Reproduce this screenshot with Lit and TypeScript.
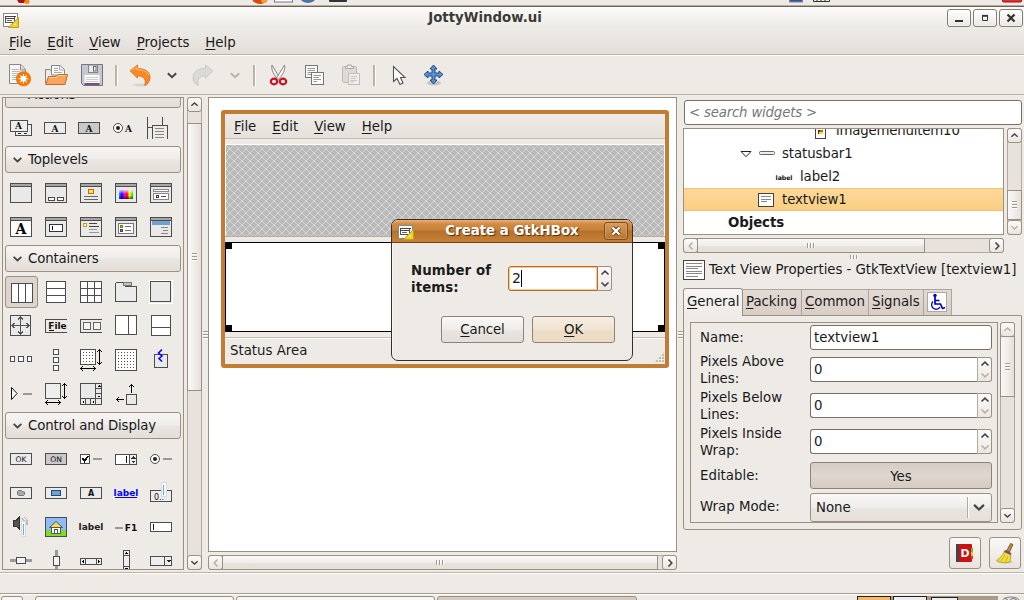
import { LitElement, html, css, svg, TemplateResult } from "lit";
import { customElement } from "lit/decorators.js";

const K = "#4d4d4d";
const L = "#e9e9e9";

const rect = (x: number, y: number, w: number, h: number, fill = L, stroke = K, r = 0) =>
  svg`<rect x=${x + 0.5} y=${y + 0.5} width=${w - 1} height=${h - 1} rx=${r} fill=${fill} stroke=${stroke}/>`;
const box = (x: number, y: number, w: number, h: number, fill: string) =>
  svg`<rect x=${x} y=${y} width=${w} height=${h} fill=${fill}/>`;
const label = (x: number, y: number, s: string, size = 8, fill = "#111", weight = "bold", fam = "DejaVu Sans") =>
  svg`<text x=${x} y=${y} font-size=${size} font-weight=${weight} font-family="${fam}, sans-serif" text-anchor="middle" fill=${fill}>${s}</text>`;
const line = (d: string, c = K, w = 1) => svg`<path d=${d} fill="none" stroke=${c} stroke-width=${w}/>`;

const win = (inner: unknown, fill = L) =>
  svg`${rect(0, 1, 22, 20, fill, K, 1)}${box(1, 2, 20, 2, "#a6a6a6")}${box(1, 4, 20, 1, K)}${inner}`;
const btn = (inner: unknown, fill = "#ececec") => svg`${rect(0, 5, 22, 12, fill, K, 1)}${inner}`;
const dots = (n: number) => {
  const out = [];
  for (let y = 3; y < n - 2; y += 3) for (let x = 3; x < n - 2; x += 3) out.push(box(x, y, 1, 1, "#555"));
  return out;
};
const arrowH = (y: number) => line(`M0.5 ${y}H15.5M3 ${y - 2.5}L0.7 ${y}L3 ${y + 2.5}M13 ${y - 2.5}L15.3 ${y}L13 ${y + 2.5}`, "#000");
const arrowV = (x: number) => line(`M${x} 0.5V15.5M${x - 2.5} 3L${x} 0.7L${x + 2.5} 3M${x - 2.5} 13L${x} 15.3L${x + 2.5} 13`, "#000");

const actions: TemplateResult[] = [
  svg`${rect(5, 7, 17, 12, "#eee", K, 1)}${rect(0, 3, 18, 12, "#eee", K, 1)}${label(8.5, 12, "A", 9, "#111", "bold", "DejaVu Serif")}${box(8, 16, 3, 1, "#333")}${box(14, 16, 3, 1, "#333")}`,
  btn(label(11, 14.5, "A", 9, "#111", "bold", "DejaVu Serif")),
  btn(label(11, 14.5, "A", 9, "#111", "bold", "DejaVu Serif"), "#c9c9c9"),
  svg`<g shape-rendering="auto"><circle cx="5" cy="11" r="4.5" fill="#fff" stroke=${K}/><circle cx="5" cy="11" r="2" fill="#222"/></g>${label(15.5, 14.5, "A", 9, "#111", "bold", "DejaVu Serif")}`,
  svg`${line("M0.5 0V22M15.5 0V8M0 10.5H6")}${line("M5.5 22V8.5H20.5V22")}${line("M8 11.5H17M8 14.5H17M8 17.5H17M8 20.5H17", "#888")}${box(5, 9, 1, 13, K)}`,
];

const toplevels: TemplateResult[] = [
  win(""),
  win(svg`${rect(3, 15, 7, 4, "#fff", K, 1)}${rect(12, 15, 7, 4, "#fff", K, 1)}`),
  win(svg`${rect(8, 7, 6, 5, "#ffec3d", "#c9661a", 1)}${line("M4 14.5H18M4 17.5H18", "#666")}`),
  win(svg`<defs><linearGradient id="hue"><stop offset="0" stop-color="#00a8ff"/><stop offset=".2" stop-color="#1a00ff"/><stop offset=".4" stop-color="#f0f"/><stop offset=".58" stop-color="#f00"/><stop offset=".75" stop-color="#ff0"/><stop offset="1" stop-color="#00d840"/></linearGradient><linearGradient id="fade" x2="0" y2="1"><stop offset="0" stop-color="#fff" stop-opacity=".75"/><stop offset=".45" stop-color="#fff" stop-opacity="0"/><stop offset=".6" stop-opacity="0"/><stop offset="1" stop-opacity=".6"/></linearGradient></defs><rect x="4" y="8" width="14" height="9" fill="url(#hue)"/><rect x="4" y="8" width="14" height="9" fill="url(#fade)"/>`),
  win(svg`${rect(3, 7, 16, 3, "#fff", "#888", 1)}${rect(3, 11, 16, 7, "#fff", "#888", 1)}${rect(6, 13, 3, 3, "#fff", "#333")}${line("M11 14.5H16", "#555")}`),
  win(label(11, 18, "A", 14, "#000", "bold", "DejaVu Serif"), "#fff"),
  win(svg`${rect(4, 8, 14, 8, "#fff", "#333", 1)}${box(7, 10, 1, 4, "#000")}`),
  win(svg`${rect(3, 7, 4, 4, "#fff", "#c9a000")}${line("M9 7.5H17M9 10.5H19", "#444")}${line("M9 13.5H17M9 16.5H19", "#999")}`),
  win(svg`${rect(3, 7, 16, 11, "#fff", "#777", 1)}${rect(5, 9, 3, 3, "#7fd83c", "#4e9a06")}${rect(5, 13, 3, 3, "#ad7fa8", "#5c3566")}${line("M10 10.5H16M10 14.5H16", "#777")}`),
  win(svg`${box(2, 5, 18, 4, "#729fcf")}${line("M11 11.5H18M13 14.5H18M11 17.5H18", "#888")}`),
];

const containers: TemplateResult[] = [
  svg`${rect(1, 2, 22, 20, "#fff", K, 1)}${line("M8.5 3V21M15.5 3V21")}`,
  svg`${rect(1, 0, 20, 22, "#fff", K, 1)}${line("M2 7.5H20M2 14.5H20")}`,
  svg`${rect(0, 0, 22, 22, "#fff", K, 1)}${line("M1 7.5H21M1 14.5H21M7.5 1V21M14.5 1V21")}`,
  svg`<path d="M0.5 20.5V2.5L1.5 1.5H8.5L11 5.5H21.5V20.5Z" fill="#ebebeb" stroke=${K}/>${rect(8, 1, 9, 4, "#c4c4c4", "#777", 1)}`,
  svg`${rect(-1, -1, 24, 24, "none", "#fff")}${rect(0, 0, 21, 21, L, K, 1)}`,
  svg`${rect(0, 0, 21, 21, L, K, 1)}${line("M10.5 2V19M2 10.5H19M8 4.5L10.5 2L13 4.5M8 16.5L10.5 19L13 16.5M4.5 8L2 10.5L4.5 13M16.5 8L19 10.5L16.5 13", "#555")}`,
  svg`${line("M22 4.5H1L0.5 5V16.5L1 17.5H22")}${label(12.5, 14, "File", 9)}${box(4, 15, 5, 1, "#111")}`,
  svg`${line("M22 4.5H1L0.5 5V16.5L1 17.5H22")}${rect(3, 7, 8, 8, "#f4f4f4", "#666", 1)}${rect(13, 7, 8, 8, "#f4f4f4", "#666", 1)}`,
  svg`${rect(0, 0, 22, 20, "#fff", K, 1)}${line("M13.5 1V19")}`,
  svg`${rect(1, 0, 20, 21, "#fff", K, 1)}${line("M2 12.5H20")}`,
  svg`${rect(0, 7, 5, 6, "#fff", K, 1)}${rect(8, 7, 6, 6, "#fff", K, 1)}${rect(17, 7, 5, 6, "#fff", K, 1)}`,
  svg`${rect(8, 0, 6, 6, "#fff", K, 1)}${rect(8, 8, 6, 6, "#fff", K, 1)}${rect(8, 16, 6, 6, "#fff", K, 1)}`,
  svg`${rect(0, 0, 16, 16, "#fff", K, 1)}${dots(16)}${arrowH(19.5)}${arrowV(19.5)}`,
  svg`${rect(0, 0, 22, 22, "#fff", K, 1)}${dots(22)}`,
  svg`${rect(4, 5, 14, 14, L, K, 1)}<path shape-rendering="auto" d="M12 0.500L8.500 4L12 7L9 9.500L12 12.500" fill="none" stroke="#00f" stroke-width="1.500"/>`,
  svg`<path d="M1.5 4.5L7 10.5L1.5 16.5Z" fill="#fff" stroke="#111" shape-rendering="auto"/>${box(13, 10, 9, 2, "#999")}`,
  svg`${rect(0, 0, 16, 16, "#eee", K, 1)}${arrowH(19.5)}${arrowV(19.5)}`,
  svg`${rect(0, 0, 22, 22, L, K, 1)}${line("M0 15.5H22M15.5 0V22M16 5.5H22M16 10.5H22M5.5 16V22M10.5 16V22")}<path d="M17 4H21L19 2ZM17 12.5H21L19 14.5ZM4 17V21L2 19ZM12.5 17V21L14.5 19Z"/>`,
  svg`${rect(11, 11, 11, 11, L, K, 1)}${line("M16.5 1.5V9.5M14 4L16.5 1.5L19 4M1.5 16.5H8.5M4 14L1.5 16.5L4 19", "#000")}`,
];

const controls: TemplateResult[] = [
  btn(label(11, 14, "OK", 7.6, "#111", "normal")),
  btn(label(11, 14, "ON", 7.6, "#111", "normal"), "#c9c9c9"),
  svg`${rect(0, 6, 10, 10, "#fff", K, 1)}${line("M2.5 10L4.5 13L8 8", "#111", 1.8)}${box(13, 10, 9, 2, "#999")}`,
  svg`${rect(0, 6, 22, 11, "#fff", K, 1)}${box(15, 7, 6, 9, "#eee")}${line("M14.5 6V17")}${box(11, 8, 1, 7, "#111")}<path d="M16 10.5H21L18.5 8ZM16 12.5H21L18.5 15Z" fill="#333"/>`,
  svg`<g shape-rendering="auto"><circle cx="5" cy="11" r="4.5" fill="#fff" stroke=${K}/><circle cx="5" cy="11" r="2" fill="#222"/></g>${box(13, 10, 9, 2, "#999")}`,
  btn(svg`<path shape-rendering="auto" d="M7.500 9.500L8.500 8.500H11.500L12.500 9.500L14.500 10V12.500L13.500 13.500H8.500L7.500 12.500Z" fill="#aaa" stroke="#777"/>`),
  btn(rect(6, 8, 10, 6, "#729fcf", "#204a87")),
  btn(label(11, 14, "A", 8, "#111")),
  svg`${label(11, 14, "label", 9, "#00f")}${box(0, 15, 22, 1, "#00f")}`,
  svg`${rect(0, 8, 22, 12, "#eee", K, 1)}${label(9, 18, "0..", 8, "#111", "normal")}${rect(11, 0, 6, 15, "#f5f8fc", "#d5dce5", 1)}${box(13, 3, 1, 10, "#7aa7e0")}`,
  svg`<path d="M3 4.500H6L9 1.500V12.500L6 10H3Z" fill="#555" stroke="#333"/>${line("M11 2L14 4V9M14 1L17 4V9", "#bbb", 1.2)}${rect(11, 5, 5, 16, "#f5f8fc", "#d5dce5", 1)}${box(13, 8, 1, 11, "#7aa7e0")}`,
  svg`${rect(0, 1, 22, 20, "#8cbcfb", K, 1)}${box(1, 14, 20, 6, "#7fdc2f")}<g shape-rendering="auto"><path d="M6.500 11.500V17.500H15.500V11.500" fill="#fff" stroke="#555"/><path d="M4.500 11.500L11 5.500L17.500 11.500Z" fill="#f6dd4d" stroke="#555"/></g>${rect(9, 13, 4, 5, "#fff", "#555")}`,
  label(11, 14, "label", 9, "#222"),
  svg`${box(0, 11, 8, 2, "#999")}${label(16, 15, "F1", 9)}`,
  svg`${rect(0, 6, 22, 10, "#fff", K, 1)}${box(3, 8, 1, 6, "#222")}`,
  svg`${box(0, 9, 22, 3, "#999")}${rect(6, 7, 10, 7, "#f4f4f4", K, 1)}`,
  svg`${box(10, 0, 3, 22, "#999")}${rect(8, 6, 7, 10, "#f4f4f4", K, 1)}`,
  svg`${rect(0, 8, 22, 7, "#eee", K, 1)}${line("M5.500 8V15M16.500 8V15")}<path d="M2 11.500L4 9.500V13.500ZM20 11.500L18 9.500V13.500Z"/>`,
  svg`${rect(8, 0, 7, 22, "#eee", K, 1)}${line("M8 5.500H15M8 16.500H15")}<path d="M9.500 4H13.500L11.500 2ZM9.500 18H13.500L11.500 20Z"/>`,
  svg`${rect(0, 6, 22, 10, "#eee", K, 1)}${line("M14.500 6V16")}<path d="M16 10H21L18.500 12.500Z" fill="#222"/>`,
];

const designerIcon = html`<svg width="16" height="16" viewBox="0 0 16 16">
  <rect x=".5" y=".5" width="14" height="13" fill="#fff" stroke="#888"/>
  <rect x="2.500" y="3.500" width="9" height="6" fill="#fff" stroke="#555"/>
  <path d="M2 3.500H13M2 5.500H12" stroke="#444"/><path d="M4 7.500H9" stroke="#666"/>
  <path d="M15.500 4.500V14.500H5.500Z" fill="#e9cf3e" stroke="#c4a000"/><path d="M13 9.500V12H10.500Z" fill="#f8ea90"/>
</svg>`;

const pageIcon = (w: number, h: number) => {
  const rows = [];
  for (let y = 3.5; y < h - 3; y += 2.5) rows.push(line(`M3 ${Math.floor(y) + 0.5}H${w - (rows.length % 3 === 2 ? 7 : 3)}`, "#888"));
  return html`<svg width=${w} height=${h} class="crisp">${rect(0, 0, w, h, "#fff", "#444", 1)}${rows}</svg>`;
};

const chev = (dir: string, muted = false, size = 10) => {
  const d: Record<string, string> = {
    up: "M1.500 6.500L5 3.200L8.500 6.500", down: "M1.500 3.500L5 6.800L8.500 3.500",
    left: "M6.500 1.500L3.200 5L6.500 8.500", right: "M3.500 1.500L6.800 5L3.500 8.500",
  };
  return html`<svg width=${size} height=${size} viewBox="0 0 10 10"><path d=${d[dir]} fill="none" stroke=${muted ? "#b9b0a7" : "#444"} stroke-width="1.600"/></svg>`;
};

const tool = (inner: unknown) => html`<span class="slot"><svg width="24" height="24" viewBox="0 0 24 24">${inner}</svg></span>`;
const undoShape = "M2 7.800L9.500 2V5.500C18 5.500 22.500 9.500 22 15.500C21.600 19 19.500 21.500 16.500 22.300C18.500 18 17 13 9.500 12.700V15Z";

const toolNew = svg`<path d="M1.500 1.500H13L17.500 6.500V20.500H1.500Z" fill="#f6f6f4" stroke="#888"/><path d="M12.500 1.500V7H17.500" fill="#ddd" stroke="#888"/><path d="M4 6.500H11M4 8.500H12M4 10.500H14M4 12.500H10M4 14.500H9M4 16.500H9" stroke="#bbb"/><circle cx="15.500" cy="15.800" r="7.300" fill="#f57900" stroke="#ee7410" stroke-width=".6"/><path d="M15.500 11V20.600M10.700 15.800H20.300M12.200 12.500L18.800 19.100M18.800 12.500L12.200 19.100" stroke="#fff" stroke-width="1.100"/><circle cx="15.500" cy="15.800" r="2.700" fill="#fff"/>`;
const toolOpen = svg`<path d="M1.500 20V6.500H6L7.500 8.500H20V20Z" fill="#ecebe9" stroke="#888"/><path d="M7.500 12V2.500H16L20.500 6.500V12Z" fill="#fafafa" stroke="#888"/><path d="M15.500 2.500V7H20.500M10 5.500H14M10 7.500H14M10 9.500H18" stroke="#aaa" fill="none"/><path d="M1.700 21.500L4.500 13.500H12L14 11.500H23.500L21 21.500Z" fill="#f9a45c" stroke="#cf6a1c"/><path d="M5 14.500H12.500L14.500 12.500H22" stroke="#fcd0a5" fill="none"/>`;
const toolSave = svg`<path d="M1.500 1.500H22.500V22.500H3.500L1.500 20.500Z" fill="#c5c7d2" stroke="#73747d"/><rect x="4.500" y="12" width="15" height="8.500" fill="#fcfcfc"/><path d="M6 14.500H18M6 16.500H18M6 18.500H18" stroke="#ccc"/><rect x="4.500" y="20" width="15" height="2" fill="#7b4b86"/><rect x="8.500" y="2" width="9" height="7.500" fill="#e8e9ed" stroke="#84858d"/><rect x="13.500" y="3.500" width="2.500" height="4.500" fill="#fff" stroke="#666"/>`;
const toolCut = svg`<path d="M6 2L13.800 15L11.800 16.500C8 12 4.800 7 6 2Z" fill="#eee" stroke="#888"/><path d="M18.500 2L10.500 15L12.500 16.500C16.500 12 19.800 7 18.500 2Z" fill="#f7f7f7" stroke="#888"/><ellipse cx="8" cy="18.500" rx="3.200" ry="2.800" fill="#eee" stroke="#cc1020" stroke-width="2.200"/><ellipse cx="17" cy="18.500" rx="3.200" ry="2.800" fill="#eee" stroke="#cc1020" stroke-width="2.200"/>`;
const toolCopy = svg`<rect x="3.500" y="2.500" width="12" height="12" fill="#fafafa" stroke="#777"/><path d="M5.500 5.500H13M5.500 7.500H13M5.500 9.500H11M5.500 11.500H9" stroke="#999"/><rect x="9.500" y="9.500" width="12" height="12" fill="#fafafa" stroke="#777"/><path d="M11.500 12.500H19M11.500 14.500H17M11.500 16.500H19M11.500 18.500H15" stroke="#999"/>`;
const toolPaste = svg`<rect x="4.500" y="3.500" width="14" height="16" rx="1" fill="#dedad5" stroke="#bdb8b3"/><path d="M7.500 5.500V3.500H9.500V2H13.500V3.500H15.500V5.500Z" fill="#eee" stroke="#aaa6a2"/><rect x="10.500" y="10.500" width="11" height="11" fill="#f0eeec" stroke="#c3bfbb"/><path d="M12.500 13.500H19M12.500 15.500H18M12.500 17.500H19M12.500 19H16" stroke="#c9c5c1"/>`;
const toolPointer = svg`<path d="M7.500 3.500V18.500L11 15.500L14 21.500L17 20L14.500 14.500H19Z" fill="#fff" stroke="#555" stroke-width="1.100"/>`;
const toolMove = svg`<ellipse cx="12" cy="20" rx="7" ry="2.500" fill="#000" opacity=".16"/><path d="M11.500 2L15 6H13V10H17V8L21 11.500L17 15V13H13V17H15L11.500 21L8 17H10V13H6V15L2 11.500L6 8V10H10V6H8Z" fill="#5c8fd0" stroke="#204a87"/>`;

const mnemonic = (s: string) => html`<span class="mn"><u>${s[0]}</u>${s.slice(1)}</span>`;

@customElement("app-root")
export class AppRoot extends LitElement {
  static styles = css`
    :host { display: block; width: 1024px; height: 600px; overflow: hidden; position: relative; background: #eeebe7;
      font: 13.33px/17px "DejaVu Sans", sans-serif; color: #1a1a1a; }
    * { box-sizing: border-box; }
    svg { display: block; flex: none; overflow: visible; }
    u { text-underline-offset: 2px; text-decoration-thickness: 1px; }
    .mn { white-space: nowrap; }
    .crisp { shape-rendering: crispEdges; }
    .screen { display: flex; flex-direction: column; height: 600px; }
    .panel { height: 7px; flex: none; border-bottom: 1px solid #6e6252; box-shadow: inset 0 -1px #b8ad9e; overflow: hidden; }
    .head { height: 48px; flex: none; background: linear-gradient(#fbfbfa, #eeebe7 40%, #e4ded8); border-bottom: 1px solid #c0b3a6; border-top: 1px solid #fff; }
    .title { display: grid; grid-template-columns: 24px 1fr 81px; height: 22px; align-items: center; }
    .title svg { margin: 3px 0 0 3px; }
    .title b { text-align: center; color: #3b3a36; padding: 0 0 3px 3px; }
    .wbs { display: flex; gap: 2px; padding: 1px 0 3px 4px; height: 22px; }
    .wb { width: 24px; height: 18px; border: 1px solid #837d76; border-radius: 3px; background: linear-gradient(#fff, #ebe7e3); display: grid; place-items: center; box-shadow: inset 0 0 0 1px #fff8; }
    .wb svg { margin: 0; }
    .menu { display: flex; }
    .head .menu { padding: 4px 0 0 9px; gap: 16px; }
    .tools { height: 40px; flex: none; border-top: 1px solid #fff; border-bottom: 1px solid #c0b3a6; display: flex; align-items: center; padding-left: 2px; }
    .slot { width: 36px; display: grid; place-items: center; }
    .slot.drop { width: 27px; }
    .sep { width: 12px; height: 21px; display: flex; justify-content: center; }
    .sep::before { content: ""; width: 2px; background: #c0b4a7; border-right: 1px solid #fff; }
    .body { height: 477px; flex: none; display: flex; padding-top: 2px; }
    .palette { margin: 0 3px 0 2px; width: 182px; height: 473px; border: 1px solid #9c9082; overflow: hidden; flex: none; }
    .palette-in { margin-top: -17px; padding: 0 2px; width: 180px; }
    .sect { height: 27px; width: 176px; margin: 0 0 9px; border: 1px solid #9c9082; border-radius: 3px; background: linear-gradient(#f7f5f3, #f0edea 45%, #e9e5e1 55%, #e4deda); display: flex; align-items: center; gap: 5px; padding: 0 0 1px 6px; letter-spacing: -.15px; }
    .grid { display: grid; grid-template-columns: repeat(5, 22px); gap: 12px 13px; padding-left: 5px; margin-bottom: 7px; }
    .grid.tight { column-gap: 12.200px; }
    .grid svg { shape-rendering: crispEdges; }
    .cell { width: 22px; height: 22px; }
    .cell.on { position: relative; }
    .cell.on::before { content: ""; position: absolute; inset: -5px -6px -5px -5px; border: 1px solid #9c9082; border-radius: 3px; background: #dcd4cd; }
    .cell.on svg { position: relative; }
    .sb { display: flex; flex: none; border: 1px solid #b5a99c; background: #e7e2dd; border-radius: 3px; }
    .sb.v { flex-direction: column; width: 15px; }
    .sb.h { height: 15px; }
    .sbb { display: grid; place-items: center; flex: none; background: linear-gradient(#fcfcfb, #e9e5e1); border: 1px solid #9c9082; margin: -1px; width: 15px; height: 15px; border-radius: 3px; }
    .thumb { border: 1px solid #9c9082; flex: none; display: flex; align-items: center; justify-content: center; }
    .v > .thumb { margin: 0 -1px; background: linear-gradient(90deg, #faf9f8, #e6e0db); }
    .h > .thumb { margin: -1px 0; background: linear-gradient(#faf9f8, #f0edea 50%, #e6e1dc 55%, #e6e0db); }
    .gap { flex: 1; }
    .grip { width: 8px; height: 5px; background: repeating-linear-gradient(90deg, #a2988c 0 1px, #fff 1px 2px, transparent 2px 3px); }
    .v .grip, .split .grip { width: 5px; height: 8px; background: repeating-linear-gradient(#a2988c 0 1px, #fff 1px 2px, transparent 2px 3px); }
    .split { width: 6px; flex: none; display: grid; place-items: center; }
    .stage { width: 469px; flex: none; }
    .canvas { height: 455px; border: 1px solid #9c9082; background: #fff; padding: 12px; }
    .frame { width: 448px; height: 258px; border: 4px solid #c17d33; border-radius: 3px; background: #eeebe7; margin: 0; }
    .frame .menu { height: 25px; gap: 16px; padding: 4px 0 0 9px; background: linear-gradient(#eeebe7, #e5e0da); border-bottom: 1px solid #c5bab0; }
    .hatch { margin-top: 5px; border: solid #fff; border-width: 1px 1px 0 1px; height: 92px; display: block; box-shadow: 0 1px #b8ada2; overflow: hidden; }
    .text { margin-top: 6px; height: 90px; border: 1px solid #000; background:
      linear-gradient(#000, #000) 0 0 / 6px 6px no-repeat, linear-gradient(#000, #000) 100% 0 / 6px 6px no-repeat,
      linear-gradient(#000, #000) 0 100% / 6px 6px no-repeat, linear-gradient(#000, #000) 100% 100% / 6px 6px no-repeat, #fff; }
    .status { margin-top: 5px; border-top: 1px solid #c5bab0; box-shadow: inset 0 1px #fff; height: 27px; padding: 4px 0 0 5px; display: flex; justify-content: space-between; }
    .resize { width: 12px; height: 12px; align-self: end; margin-bottom: 1px; clip-path: polygon(100% 0, 100% 100%, 0 100%); background: radial-gradient(circle at 1px 1px, #c3bab0 0.900px, transparent 1px) 0 0 / 3px 3px; }
    .stage .sb { margin-top: 3px; }
    .side { width: 341px; padding-top: 3px; flex: none; }
    .search { height: 25px; width: 338px; margin-left: 1px; border: 1px solid #7b6f63; border-radius: 3px; background: #fff; padding: 3px 4px; font-style: italic; color: #777; letter-spacing: -.2px; }
    .treebox { display: flex; gap: 3px; margin-top: 3px; }
    .tree { width: 321px; height: 107px; border: 1px solid #9c9082; background: #fff; overflow: hidden; }
    .tree-in { margin-top: -10px; letter-spacing: -.1px; }
    .row { height: 23px; display: flex; align-items: center; gap: 8px; }
    .r1 { padding-left: 131px; gap: 10px; letter-spacing: -.2px; }
    .r2 { padding-left: 56px; gap: 7px; }
    .r3 { padding-left: 92px; }
    .r4 { padding-left: 74px; }
    .r5 { padding-left: 44px; }
    .row.sel { background: linear-gradient(#ffd89a, #f9cf83); border: solid #f0c274; border-width: 1px 0; }
    .hs { width: 321px; margin-top: 3px; }
    .mid { height: 7px; display: grid; place-items: center; }
    .mid .grip { height: 4px; }
    .ptitle { display: flex; gap: 4px; height: 19px; align-items: center; white-space: nowrap; letter-spacing: -.05px; }
    .tabs { display: flex; height: 28px; margin-top: 8px; align-items: flex-end; letter-spacing: -.03px; }
    .tab { height: 26px; border: solid #b0a498; border-width: 1px 1px 0 0; background: linear-gradient(#e2dbd5, #d8cec6); padding: 3px 0 0 3px; white-space: nowrap; }
    .tab.sel { height: 28px; border: 1px solid #9c9082; border-bottom: 0; border-radius: 3px 3px 0 0; background: linear-gradient(#f8f6f4, #eeebe7); padding: 4px 0 0 3px; margin-bottom: -1px; position: relative; }
    .tab .a11y { width: 20px; height: 20px; border: 1px solid #aaa; background: #fff; margin-top: -1px; }
    .book { height: 215px; width: 339px; border: 1px solid #9c9082; border-radius: 0 0 3px 3px; display: flex; gap: 2px; padding: 6px 0 0 6px; }
    .form { width: 308px; height: 201px; border: 1px solid #9c9082; overflow: hidden; padding: 1px 0 0 9px; display: grid; grid-template-columns: 110px 182px; grid-template-rows: 28px 36px 36px 36px 31px 32px; }
    .form label { align-self: center; margin-top: -1px; }
    .entry { height: 25px; border: 1px solid #7b6f63; border-radius: 3px; background: #fff; padding: 3px 0 0 3px; margin-top: 1px; }
    .spin { display: flex; height: 25px; margin-top: 5px; }
    .spin .val { flex: 1; border: 1px solid #7b6f63; border-right-color: #b5a99c; border-radius: 3px 0 0 3px; background: #fff; padding: 3px 0 0 3px; }
    .spin .ar { width: 14px; border: 1px solid #9c9082; border-left: 0; border-radius: 0 3px 3px 0; background: linear-gradient(#fbfaf9, #ece8e4); display: grid; place-items: center; grid-template-rows: 1fr 1fr; }
    .yes { height: 27px; margin-top: 2px; border: 1px solid #8e8378; border-radius: 3px; background: linear-gradient(#d6cdc5, #dfd7d0 50%, #d5cbc2); text-align: center; padding-top: 5px; }
    .combo { height: 29px; margin-top: 2px; border: 1px solid #9c9082; border-radius: 3px; background: linear-gradient(#faf9f8, #efece9 50%, #e8e4df 55%, #e6e0db); display: flex; align-items: center; padding: 0 5px 1px 5px; }
    .combo i { width: 2px; height: 21px; border-left: 1px solid #b5a99c; background: #fff; margin: 0 3px 0 auto; }
    .helpers { display: flex; justify-content: flex-end; gap: 8px; padding: 7px 3px 0 0; }
    .sq { width: 32px; height: 32px; border: 1px solid #9c9082; border-radius: 3px; background: linear-gradient(#faf9f8, #e8e3de); display: grid; place-items: center; }
    .statusbar { height: 21px; border-top: 1px solid #fff; border-bottom: 1px solid #a89c8e; box-shadow: 0 -1px #c0b3a6; flex: none; margin-top: 1px; }
    .tasks { flex: 1; display: flex; padding: 1px 3px 0 1px; overflow: hidden; border-top: 1px solid #fff; }
    .task { height: 14px; width: 199px; margin-right: 2px; border: 1px solid #9c9082; border-radius: 3px; background: #f8f6f4; flex: none; }
    .task.mini { width: 22px; margin-right: 12px; }
    .task.on { background: #d5cbc2; width: 200px; }
    .pager { display: flex; gap: 2px; margin-left: auto; width: 141px; height: 14px; background: #a89b8b; margin-right: 3px; }
    .ws { width: 34px; border: 1px solid #222; background: #eee; }
    .ws.cur { background: #fbb766; }
    .ws.s { width: 27px; margin: 1px 0 0 2px; }
    .dialog { position: absolute; left: 391px; top: 219px; width: 242px; height: 142px; border: 1px solid #373028; border-radius: 7px; background: #eeebe7; overflow: hidden; box-shadow: inset 1px 0 #fff8; }
    .dtitle { height: 23px; background: linear-gradient(#eab077, #d08a41 18%, #c9823a 45%, #b4702b 50%, #c98136); border-bottom: 1px solid #6b4115; display: grid; grid-template-columns: 28px 1fr 28px; align-items: center; }
    .dtitle svg { margin: 3px 0 0 6px; }
    .dtitle b { text-align: center; color: #fff; text-shadow: 1px 1px 1px #4a3012; padding: 0 0 1px 0; white-space: nowrap; }
    .dclose { width: 24px; height: 18px; border: 1px solid #7d4f20; border-radius: 3px; background: linear-gradient(#d89c5e, #b8752f); display: grid; place-items: center; box-shadow: inset 0 0 0 1px #e0ab7388; }
    .dclose svg { margin: 0; }
    .ask { display: flex; padding: 19px 0 0 19px; height: 73px; }
    .ask b { width: 97px; padding-top: 0; letter-spacing: .1px; }
    .ask .spin { width: 104px; margin-top: 4px; }
    .ask .val { border: 1px solid #b86c25; box-shadow: inset 0 0 0 1px #f3c797; font-size: 14px; }
    .caret { display: inline-block; width: 1px; height: 17px; background: #000; vertical-align: top; }
    .acts { display: flex; gap: 8px; padding-left: 49px; }
    .act { width: 83px; height: 27px; border: 1px solid #8e8378; border-radius: 3px; background: linear-gradient(#faf9f8, #efece9 50%, #e9e4df 55%, #e4deda); text-align: center; padding-top: 4px; letter-spacing: -.15px; }
    .act.def { background: linear-gradient(#f7ede1, #f1e4d3 50%, #ecdcc6 55%, #ecdcc6); }
  `;

  private vbar(h: number, before: number, thumb: number, up = false, down = false) {
    return html`<div class="sb v" style="height:${h}px">
      <span class="sbb">${chev("up", up, 9)}</span>
      <span class="thumb" style="height:${thumb}px;margin-top:${before}px"><span class="grip"></span></span>
      <span class="gap"></span><span class="sbb">${chev("down", down, 9)}</span></div>`;
  }
  private hbar(thumb: number, cls = "") {
    return html`<div class="sb h ${cls}"><span class="sbb">${chev("left", true)}</span>
      <span class="thumb" style="width:${thumb}px"><span class="grip"></span></span>
      <span class="gap"></span><span class="sbb">${chev("right")}</span></div>`;
  }
  private section(name: string, icons: TemplateResult[], selected = -1, tight = false) {
    return html`<div class="sect">${chev("down", false, 11)}<span>${name}</span></div>
      <div class="grid ${tight ? "tight" : ""}">${icons.map((i, n) => html`<span class="cell ${n === selected ? "on" : ""}">
        <svg width="22" height="22">${i}</svg></span>`)}</div>`;
  }
  private spin(v: unknown, muted = true) {
    return html`<div class="spin"><div class="val">${v}</div><div class="ar">${chev("up")}${chev("down", muted)}</div></div>`;
  }

  render() {
    return html`<div class="screen">
      <div class="panel"><svg width="1024" height="5">
        <path d="M17 0H26L24 3H19Z" fill="#b01010"/><circle cx="27" cy="1.500" r="2.500" fill="#f08a20"/>
        <ellipse cx="260" cy="-2" rx="8" ry="6" fill="#d9480f"/><circle cx="264" cy="0" r="3" fill="#f5a030"/>
        <rect x="274.500" y="-3" width="18" height="5" fill="#fff" stroke="#777"/><ellipse cx="308" cy="-2" rx="7.500" ry="5" fill="#4a72a8"/>
        <rect x="329" y="-3" width="18" height="5" rx="1" fill="#30333a"/>
        <rect x="789.500" y="-3" width="13" height="5" fill="#2a55a0" stroke="#888"/><path d="M813.500 0V1.500H829.500V0M817 0V2M821 0V2M825 0V2" stroke="#333" fill="none"/>
        <rect x="1002.500" y="-4" width="19" height="6" rx="1" fill="#e03030" stroke="#a01010"/></svg></div>
      <div class="head">
        <div class="title">${designerIcon}<b>JottyWindow.ui</b>
          <div class="wbs">
            <span class="wb"><svg width="10" height="10"><rect x="1" y="7" width="8" height="2" fill="#333"/></svg></span>
            <span class="wb"><svg width="10" height="10"><path d="M2.500 3V7.500H7.500V3Z" fill="none" stroke="#333"/><path d="M2 2.700H8" stroke="#333" stroke-width="1.600"/></svg></span>
            <span class="wb"><svg width="10" height="10"><path d="M1.500 1.500L8.500 8.500M8.500 1.500L1.500 8.500" stroke="#333" stroke-width="2.300"/></svg></span>
          </div></div>
        <div class="menu">${["File", "Edit", "View", "Projects", "Help"].map(mnemonic)}</div>
      </div>
      <div class="tools">
        ${tool(toolNew)}${tool(toolOpen)}${tool(toolSave)}<span class="sep"></span>
        ${tool(svg`<ellipse cx="13" cy="22" rx="8" ry="1.500" opacity=".1"/><path d=${undoShape} fill="#f98a22" stroke="#d96a10" stroke-width=".8"/><path d="M3.800 7.700L8.700 4V6.500C15 6.500 19 8.500 20.500 12" stroke="#fcc07f" fill="none"/>`)}
        <span class="slot drop">${chev("down", false, 12)}</span>
        ${tool(svg`<g transform="translate(24 0) scale(-1 1)"><path d=${undoShape} fill="#dbdad6" stroke="#c3c1bc" stroke-width=".8"/></g>`)}
        <span class="slot drop">${chev("down", true, 12)}</span><span class="sep"></span>
        ${tool(toolCut)}${tool(toolCopy)}${tool(toolPaste)}<span class="sep"></span>${tool(toolPointer)}${tool(toolMove)}
      </div>
      <div class="body">
        <div class="palette"><div class="palette-in">
          ${this.section("Actions", actions, -1, true)}
          ${this.section("Toplevels", toplevels)}
          ${this.section("Containers", containers, 0)}
          ${this.section("Control and Display", controls)}
        </div></div>
        ${this.vbar(473, 12, 268)}
        <div class="split"><span class="grip"></span></div>
        <div class="stage">
          <div class="canvas"><div class="frame">
            <div class="menu">${["File", "Edit", "View", "Help"].map(mnemonic)}</div>
            <svg class="hatch" width="440" height="92"><defs><pattern id="lattice" width="8" height="8" patternUnits="userSpaceOnUse">
              <rect width="8" height="8" fill="#bababa"/><path d="M0 0L8 8M8 0L0 8" stroke="#d6d6d6" stroke-width="1"/></pattern></defs>
              <rect width="438" height="92" fill="url(#lattice)"/></svg>
            <div class="text"></div>
            <div class="status">Status Area<span class="resize"></span></div>
          </div></div>
          ${this.hbar(436)}
        </div>
        <div class="split"><span class="grip"></span></div>
        <div class="side">
          <div class="search">&lt; search widgets &gt;</div>
          <div class="treebox"><div class="tree"><div class="tree-in">
            <div class="row r1"><svg width="11" height="16" class="crisp">${rect(0, 0, 11, 16, "#fff", "#444")}${box(3, 7, 3, 4, "#c00")}${box(5, 7, 3, 4, "#4a0")}${box(4, 9, 4, 2, "#fd3")}</svg>imagemenuitem10</div>
            <div class="row r2"><svg width="12" height="8"><path d="M1 1.500H11L6 6.700Z" fill="#fff" stroke="#222"/></svg><svg width="16" height="5">${rect(0, 0, 16, 4, "#eee", "#666", 1)}</svg>statusbar1</div>
            <div class="row r3"><svg width="16" height="10">${label(8, 8, "label", 6.3, "#111")}</svg>label2</div>
            <div class="row r4 sel">${pageIcon(16, 14)}textview1</div>
            <div class="row r5"><b>Objects</b></div>
          </div></div>${this.vbar(107, 48, 30, false, true)}</div>
          ${this.hbar(228, "hs")}
          <div class="mid"><span class="grip"></span></div>
          <div class="ptitle">${pageIcon(22, 20)}<span>Text View Properties - GtkTextView [textview1]</span></div>
          <div class="tabs">
            <div class="tab sel" style="width:60px">${mnemonic("General")}</div><div class="tab" style="width:59px">${mnemonic("Packing")}</div>
            <div class="tab" style="width:67px">${mnemonic("Common")}</div><div class="tab" style="width:55px">${mnemonic("Signals")}</div>
            <div class="tab" style="width:28px"><div class="a11y"><svg width="18" height="18"><circle cx="7" cy="2.500" r="1.700" fill="#00b"/><path d="M7 4V11H12.500L14.500 15.500L17 14.500M7 7.500H11.500" fill="none" stroke="#00b" stroke-width="1.700"/><path d="M5 8.500A4.500 4.500 0 1 0 12 14" fill="none" stroke="#00b" stroke-width="1.300"/></svg></div></div>
          </div>
          <div class="book"><div class="form">
            <label>Name:</label><div class="entry">textview1</div>
            <label>Pixels Above Lines:</label>${this.spin("0")}
            <label>Pixels Below Lines:</label>${this.spin("0")}
            <label>Pixels Inside Wrap:</label>${this.spin("0")}
            <label>Editable:</label><div class="yes">Yes</div>
            <label>Wrap Mode:</label><div class="combo">None<i></i>${chev("down", false, 14)}</div>
          </div>${this.vbar(201, 0, 61, true)}</div>
          <div class="helpers">
            <span class="sq"><svg width="18" height="20"><rect x="0" y="1" width="16" height="18" rx="1" fill="#c11"/><rect x="0" y="1" width="3" height="18" fill="#444"/><rect x="15" y="5" width="2" height="4" fill="#6b3"/><rect x="15" y="9" width="2" height="4" fill="#fb3"/><rect x="15" y="13" width="2" height="3" fill="#e33"/>${label(9, 14, "D", 11, "#fff")}</svg></span>
            <span class="sq"><svg width="20" height="22"><ellipse cx="10" cy="20" rx="8" ry="1.500" opacity=".12"/><path d="M11.500 9L15.500 1.500L18 2.500L14.500 10Z" fill="#b98a4a" stroke="#6e4a17" stroke-width=".8"/><path d="M9.500 9L16 12L15 20C10 21.500 5 20.500 1.500 18.500C5 16 8 13.500 9.500 9Z" fill="#f0dc3c" stroke="#b09a10" stroke-width=".8"/><path d="M9.500 9L16 12" stroke="#75507b" stroke-width="2.200"/><path d="M10 13L6 19M13 14L10.500 20" stroke="#c4a812" stroke-width=".7"/></svg></span>
          </div>
        </div>
      </div>
      <div class="statusbar"></div>
      <div class="tasks"><span class="task mini"></span><span class="task"></span><span class="task"></span><span class="task on"></span>
        <span class="pager"><span class="ws cur"></span><span class="ws"></span><span class="ws s"></span></span>
        <svg width="20" height="8"><ellipse cx="10" cy="4" rx="8" ry="3" fill="#ddd" stroke="#888"/><path d="M4 2L8 5L12 2L16 4" stroke="#777" fill="none"/></svg></div>
    </div>
    <div class="dialog">
      <div class="dtitle">${designerIcon}<b>Create a GtkHBox</b>
        <span class="dclose"><svg width="10" height="10"><path d="M1.500 1.500L8.500 8.500M8.500 1.500L1.500 8.500" stroke="#5a3a18" stroke-width="4"/><path d="M1.500 1.500L8.500 8.500M8.500 1.500L1.500 8.500" stroke="#fff" stroke-width="2.300"/></svg></span></div>
      <div class="ask"><b>Number of items:</b>${this.spin(html`2<span class="caret"></span>`, false)}</div>
      <div class="acts"><div class="act">${mnemonic("Cancel")}</div><div class="act def">${mnemonic("OK")}</div></div>
    </div>`;
  }
}
